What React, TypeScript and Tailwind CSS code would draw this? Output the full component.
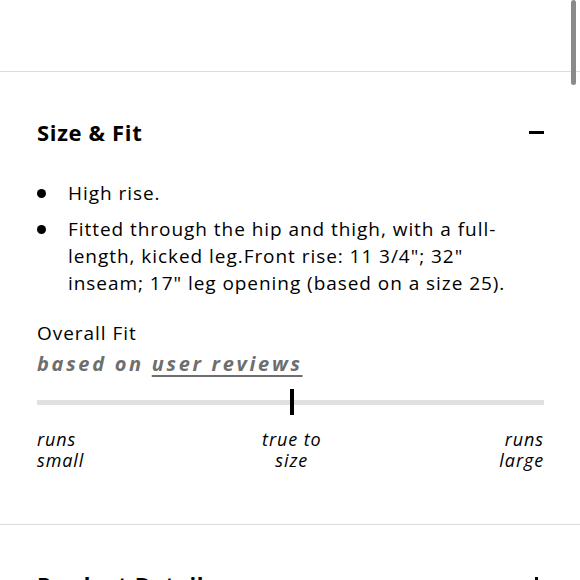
// Size & Fit accordion panel, product page (mobile)
const bullets = [
  "High rise.",
  'Fitted through the hip and thigh, with a full-length, kicked leg.Front rise: 11 3/4"; 32" inseam; 17" leg opening (based on a size 25).',
];

export default function App() {
  return (
    <div className="relative h-[580px] w-[580px] overflow-hidden bg-white text-black [font-family:'Open_Sans','Noto_Sans',sans-serif]">
      {/* scrollbar thumb */}
      <div className="absolute right-[4px] top-0 h-[85px] w-[5px] rounded-full bg-[#8a8a8a]" />

      <div className="h-[72px] border-b border-[#dcdcdc]" />

      <section className="border-b border-[#dcdcdc] pb-[53px] pl-[37px] pr-[36px] pt-[46px]">
        <div className="flex items-center justify-between">
          <h2 className="text-[22px] font-bold leading-[28px] tracking-[0.03em]">Size &amp; Fit</h2>
          <span className="h-[3px] w-[15px] bg-black" />
        </div>

        <ul className="mt-[34px] flex flex-col gap-[9px] text-[19px] leading-[27px] tracking-[0.05em]">
          {bullets.map((b) => (
            <li key={b} className="flex">
              <span className="flex w-[31px] shrink-0 pt-[9px]">
                <span className="h-[9px] w-[9px] rounded-full bg-black" />
              </span>
              <span>{b}</span>
            </li>
          ))}
        </ul>

        <p className="mt-[23px] text-[19px] leading-[27px] tracking-[0.05em]">Overall Fit</p>
        <p className="mt-[3px] text-[20px] font-bold italic leading-[27px] tracking-[0.135em] text-[#6e6e6e]">
          based on <span className="underline decoration-[2px] underline-offset-[4px]">user reviews</span>
        </p>

        <div className="relative mt-[23px] h-[5px] w-full bg-[#e0e0e0]">
          <div className="absolute left-[253px] top-[-11px] h-[26px] w-[4px] bg-black" />
        </div>

        <div className="mt-[24px] flex justify-between text-[18px] italic leading-[21px] tracking-[0.05em]">
          <span>
            runs
            <br />
            small
          </span>
          <span className="text-center">
            true to
            <br />
            size
          </span>
          <span className="text-right">
            runs
            <br />
            large
          </span>
        </div>
      </section>

      <div className="flex items-center justify-between pl-[37px] pr-[36px] pt-[45px]">
        <h2 className="text-[22px] font-bold leading-[28px] tracking-[0.03em]">Product Details</h2>
        <span className="relative h-[15px] w-[15px]">
          <span className="absolute left-0 top-[6px] h-[3px] w-[15px] bg-black" />
          <span className="absolute left-[6px] top-0 h-[15px] w-[3px] bg-black" />
        </span>
      </div>
    </div>
  );
}
